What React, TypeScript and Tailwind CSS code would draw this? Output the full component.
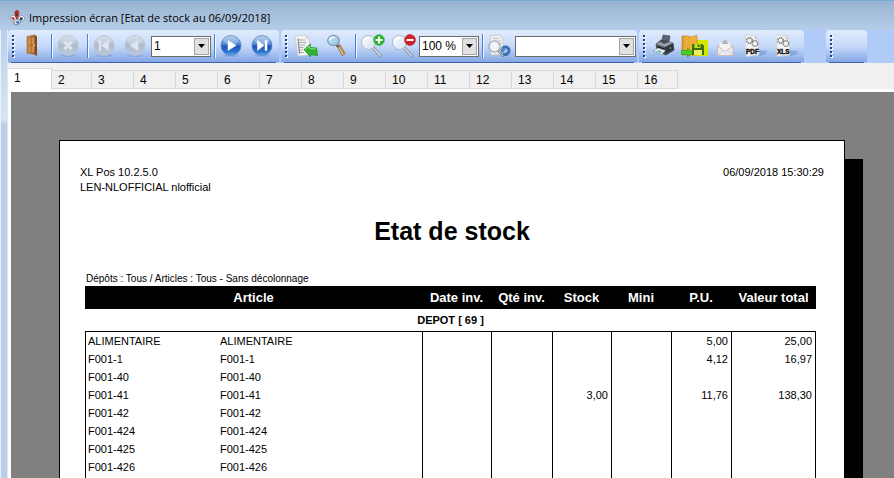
import { useState, type ReactNode } from "react";
import clsx from "clsx";

const TABS = Array.from({ length: 16 }, (_, i) => i + 1);

interface StockRow {
  code: string;
  label: string;
  stock?: string;
  price?: string;
  total?: string;
}

const ROWS: StockRow[] = [
  { code: "ALIMENTAIRE", label: "ALIMENTAIRE", price: "5,00", total: "25,00" },
  { code: "F001-1", label: "F001-1", price: "4,12", total: "16,97" },
  { code: "F001-40", label: "F001-40" },
  { code: "F001-41", label: "F001-41", stock: "3,00", price: "11,76", total: "138,30" },
  { code: "F001-42", label: "F001-42" },
  { code: "F001-424", label: "F001-424" },
  { code: "F001-425", label: "F001-425" },
  { code: "F001-426", label: "F001-426" },
];

function Icon({ children, w = 24 }: { children: ReactNode; w?: number }) {
  return (
    <svg width={w} height="24" viewBox={`0 0 ${w} 24`} aria-hidden="true" className="shrink-0">
      {children}
    </svg>
  );
}

// Gradients shared by all toolbar icons
function IconDefs() {
  return (
    <svg width="0" height="0" className="absolute" aria-hidden="true">
      <defs>
        <linearGradient id="ball" x1="0" y1="0" x2="0" y2="1">
          <stop offset="0" stopColor="#a3bfe6" />
          <stop offset="0.4" stopColor="#5a8fd8" />
          <stop offset="0.55" stopColor="#1d56b4" />
          <stop offset="0.8" stopColor="#2b72cf" />
          <stop offset="1" stopColor="#5db4f4" />
        </linearGradient>
        <linearGradient id="ballOff" x1="0" y1="0" x2="0" y2="1">
          <stop offset="0" stopColor="#ccd6e4" />
          <stop offset="0.5" stopColor="#b0bccd" />
          <stop offset="1" stopColor="#bccadf" />
        </linearGradient>
        <linearGradient id="wood" x1="0" y1="0" x2="1" y2="0">
          <stop offset="0" stopColor="#c98a4a" />
          <stop offset="1" stopColor="#a8662c" />
        </linearGradient>
        <linearGradient id="lens" x1="0" y1="0" x2="1" y2="1">
          <stop offset="0" stopColor="#ffffff" />
          <stop offset="1" stopColor="#cfe0f4" />
        </linearGradient>
        <linearGradient id="lensBlue" x1="0" y1="0" x2="1" y2="1">
          <stop offset="0" stopColor="#d9f2fc" />
          <stop offset="1" stopColor="#7fbbe0" />
        </linearGradient>
        <linearGradient id="folder" x1="0" y1="0" x2="1" y2="0">
          <stop offset="0" stopColor="#e0962a" />
          <stop offset="0.5" stopColor="#f7c150" />
          <stop offset="1" stopColor="#d98d1c" />
        </linearGradient>
      </defs>
    </svg>
  );
}

function Ball({ off, children }: { off?: boolean; children: ReactNode }) {
  return (
    <Icon>
      <ellipse cx="11" cy="21.5" rx="8" ry="1.5" fill="#6f90c4" opacity="0.4" />
      <circle cx="11" cy="11.5" r="10" fill={off ? "url(#ballOff)" : "url(#ball)"} stroke={off ? "#b7c2d2" : "#5580bf"} strokeWidth="0.7" />
      <ellipse cx="11" cy="6.500" rx="7.500" ry="4.200" fill="#fff" opacity={off ? 0.2 : 0.25} />
      <g transform="translate(-1 0)" fill={off ? "#dfe6ef" : "#fff"} stroke={off ? "#dfe6ef" : "#fff"} strokeWidth="0.5">
        {children}
      </g>
    </Icon>
  );
}

function AppIcon() {
  return (
    <svg width="16" height="16" viewBox="0 0 16 16" aria-hidden="true" className="shrink-0">
      <path d="M1 6.500 5 5l3 3-1 4-4-1z" fill="#f4f6fa" stroke="#7a8494" strokeWidth="0.6" />
      <path d="m9 7 4-2 3 3-2 3-4-1z" fill="#e9edf4" stroke="#7a8494" strokeWidth="0.6" />
      <path d="m5 10 4-1 3 3-3 3-4-1z" fill="#dce4f0" stroke="#4c5a70" strokeWidth="0.6" />
      <path d="M6 1.500 8.500 0 10 2l-.5 4L8 9 6 6z" fill="#d22f2a" stroke="#6b1d1d" strokeWidth="0.5" />
      <path d="M2 7.500 4.500 7 6 9l-2 1z" fill="#c9302c" />
      <path d="M11 7.500h3l-1 2.500h-2z" fill="#24344f" />
      <path d="m6.500 11.500 3-.5 1 2-2 1z" fill="#3f66a8" />
      <path d="M7 2.500 8 6" stroke="#26262c" strokeWidth="1" />
    </svg>
  );
}

function DoorIcon() {
  return (
    <Icon>
      <path d="m6 2.500 8-1.500v19.500L6 19z" fill="url(#wood)" stroke="#96602c" strokeWidth="0.6" />
      <path d="m14 1 2 1.500v20L14 20.500z" fill="#7d4b1d" />
      <path d="m7.500 4.500 2-.4v6l-2 .2zM11 3.900l2-.4V10l-2 .2zM7.500 12.500l2-.1v5.200l-2-.3zM11 12.300l2-.1v6l-2-.3z" fill="#d89d5c" stroke="#b07638" strokeWidth="0.500" />
      <circle cx="13.200" cy="11.300" r="0.900" fill="#f6e3a0" />
    </Icon>
  );
}

function ReportBackIcon() {
  return (
    <Icon>
      <path d="m1 2 11-1 3 3 1 17-12 1z" fill="#f4f4f2" stroke="#c3c6ca" strokeWidth="0.7" />
      <path d="m12 1 .3 3.300L15 4" fill="#dcdcdc" stroke="#b9bcc0" strokeWidth="0.6" />
      <path d="M4 6h7M4.200 8.500h8M4.300 11h7M4.500 13.500h5M4.600 16h4M4.800 18.500h5" stroke="#a3a7ab" strokeWidth="1" />
      <path d="M4 4.500 5.500 20" stroke="#8b8f94" strokeWidth="1.200" />
      <path d="M10 15.500 16.500 10v3.500l6 .5 1 7.500-7-.8V23z" fill="#2fb52d" stroke="#1b8a20" strokeWidth="0.7" />
      <path d="m11.500 15.300 4.200-3.400v2.600l6 .5" fill="none" stroke="#96e884" strokeWidth="0.9" />
    </Icon>
  );
}

function LoupeIcon() {
  return (
    <Icon>
      <path d="m12 12 3-1.500 5 9-2.500 2.500z" fill="#c48e50" stroke="#8a6334" strokeWidth="0.6" />
      <path d="m13.500 12.500 4.500 8" stroke="#ecc891" strokeWidth="1" />
      <path d="m10.500 11.500 2.500-1 1.500 2-2 1.200z" fill="#535d6b" />
      <ellipse cx="8.500" cy="6.500" rx="5.800" ry="5.200" fill="url(#lensBlue)" stroke="#8192a5" strokeWidth="1.200" />
      <path d="M4.500 6c.5-2 2.500-3 5-2.500" stroke="#fff" strokeWidth="1.200" fill="none" />
    </Icon>
  );
}

function ZoomIcon({ out }: { out?: boolean }) {
  return (
    <Icon>
      <path d="m12.500 14 7 8" stroke="#83898f" strokeWidth="3" strokeLinecap="round" />
      <path d="m12.500 14 7 8" stroke="#dcdfe2" strokeWidth="1.400" strokeLinecap="round" />
      <circle cx="7.500" cy="8.500" r="7" fill="url(#lens)" stroke="#aab5c2" strokeWidth="1" />
      <path d="M3 7c.7-2.300 2.500-3.500 5-3.200" stroke="#fff" strokeWidth="1.500" fill="none" />
      <circle cx="18" cy="6" r="5.400" fill={out ? "#d3202a" : "#27b32b"} stroke={out ? "#a3121b" : "#4fa951"} strokeWidth="0.600" />
      <path d={out ? "M14.500 6h7" : "M14.500 6h7M18 2.500v7"} stroke="#fff" strokeWidth="2" />
    </Icon>
  );
}

function PageSearchIcon() {
  return (
    <Icon>
      <path d="m2 1.500 10-.5 3 3 .5 16.500L3 21z" fill="#ececec" stroke="#bfc3c8" strokeWidth="0.7" />
      <path d="M5 4.500h6M5 7h8M10 9.500h4" stroke="#c2c5c9" />
      <path d="M14.500 14.500c1.500-2.500 6-2 6.500 1.500.500 3.500-3 5.500-6.500 4" fill="none" stroke="#3c70b8" strokeWidth="3" />
      <path d="m12 14 6 1.500-4.500 4z" fill="#4f86ca" />
      <path d="m10 16.500 5 5.500" stroke="#7c828a" strokeWidth="2.500" strokeLinecap="round" />
      <path d="m10 16.500 5 5.500" stroke="#d5d8dc" strokeWidth="1" strokeLinecap="round" />
      <circle cx="6.500" cy="12.500" r="5.500" fill="#f1f5fa" fillOpacity="0.900" stroke="#9aa3ad" strokeWidth="1.200" />
    </Icon>
  );
}

function PrinterIcon() {
  return (
    <Icon>
      <path d="m11 1 7 1-1.500 9-7-2z" fill="#5d6670" stroke="#3b434c" strokeWidth="0.600" />
      <path d="m4 10 5-4 12 3 1 7-8 5-9-4z" fill="#4b525a" stroke="#2c3238" strokeWidth="0.600" />
      <path d="m4 10 9 3 8-4-4-1-5 2-4-2z" fill="#98a0a8" />
      <path d="m13 13.500 8-4 .5 6-8 4.500z" fill="#30363c" />
      <path d="m5.500 13 7 2.500" stroke="#16191c" strokeWidth="1.500" />
      <path d="m1 17 5-3 7.500 2.500-4 4z" fill="#f3f7fa" stroke="#7d878f" strokeWidth="0.600" />
      <path d="m4 17.500 2.500-1.500 4 1.500-2 1.500z" fill="#6bb8c9" />
      <circle cx="18.500" cy="14" r="0.800" fill="#74dc68" />
    </Icon>
  );
}

function FolderSaveIcon() {
  return (
    <Icon w={28}>
      <path d="M12 6h15v16H12z" fill="#d3e600" />
      <path d="M1 2h7l2 1.500h6V21H1z" fill="url(#folder)" stroke="#b87818" strokeWidth="0.600" />
      <path d="m7 4 9-3v19l-9 2z" fill="#f1ae35" stroke="#c98c22" strokeWidth="0.500" />
      <path d="M11 10h10l2 1.500V21H11z" fill="#3e6e12" />
      <path d="M13.500 10h6v4h-6z" fill="#c8e218" />
      <path d="M13 16h8v5h-8z" fill="#e8f060" />
      <path d="M16.500 10.500h2V13h-2z" fill="#3e6e12" />
      <path d="M.500 16.500h6V14l5 4.500L6.500 23v-2.500h-6z" fill="#45cf22" stroke="#279a14" strokeWidth="0.600" />
    </Icon>
  );
}

function MailIcon() {
  return (
    <Icon>
      <path d="m3.500 11.500 7.500-6 8 6v10H3.500z" fill="#d5dae2" stroke="#bcc2cc" strokeWidth="0.700" />
      <path d="M5.500 8.500h11v6L11 17.500l-5.500-3z" fill="#f2f2f2" />
      <path d="m11 6-3.500 4h7z" fill="#a9b1ba" />
      <path d="M3.500 12v9.500H19V12l-8 5.500z" fill="#e8ebf0" stroke="#d8a6a0" strokeWidth="0.700" />
      <path d="m3.800 21.200 5.700-5M18.800 21.200l-5.600-5" stroke="#c3c9d2" strokeWidth="0.700" />
    </Icon>
  );
}

function ExportIcon({ kind }: { kind: string }) {
  return (
    <Icon w={28}>
      <path d="m13 16 11 1-1 3-8 2.500z" fill="#6c8fc4" opacity="0.550" />
      <path d="m2 1 10 .5 3 3.500 1 16-13 1.500z" fill="#f3f3f3" stroke="#c9ccd0" strokeWidth="0.700" />
      <path d="M12 1.500V5h3" fill="#dadada" stroke="#b9bcc0" strokeWidth="0.600" />
      <circle cx="6.500" cy="6.500" r="2.800" fill="none" stroke="#777b80" strokeWidth="1.500" strokeDasharray="1.600 0.600" />
      <circle cx="12" cy="9.500" r="2.800" fill="none" stroke="#85898e" strokeWidth="1.500" strokeDasharray="1.600 0.600" />
      <text x="3" y="19.500" fontFamily="Liberation Sans, sans-serif" fontSize="6.500" fontWeight="700" fill="#111" stroke="#111" strokeWidth="0.400">
        {kind}
      </text>
    </Icon>
  );
}

function ToolButton({ label, disabled, children }: { label: string; disabled?: boolean; children: ReactNode }) {
  return (
    <button type="button" aria-label={label} title={label} disabled={disabled} className="flex h-6 w-[31px] shrink-0 items-center justify-center">
      {children}
    </button>
  );
}

function Separator() {
  return <div className="ml-[3px] h-6 w-0.5 shrink-0 border-l border-[#4f7fd0] bg-[#f1f6ff]" />;
}

function ToolGroup({ children, className }: { children?: ReactNode; className?: string }) {
  return (
    <div className={clsx("flex shrink-0 flex-col", className)}>
      <div className="flex h-8 items-center rounded-t bg-linear-to-b from-[#e1ecfd] via-[#c7dafa] to-[#83a7e4] pr-px pl-1">
        <div className="mr-[3px] flex flex-col gap-0.5">
          {[0, 1, 2, 3, 4, 5].map((dot) => (
            <span key={dot} className="size-0.5 bg-[#27408b] shadow-[1px_1px_0_#fff]" />
          ))}
        </div>
        {children}
      </div>
      <div className="mx-[3px] h-px bg-[#3b62a8]" />
    </div>
  );
}

interface ComboProps {
  label: string;
  value: string;
  options: string[];
  onChange: (value: string) => void;
  className: string;
}

function Combo({ label, value, options, onChange, className }: ComboProps) {
  return (
    <div className={clsx("relative shrink-0", className)}>
      <select
        aria-label={label}
        value={value}
        onChange={(e) => onChange(e.target.value)}
        className="block h-[21px] w-full appearance-none border border-[#6d6d6d] bg-white pr-4 pl-0.5 text-xs/4 text-black outline-none"
      >
        {options.map((o) => (
          <option key={o} value={o}>
            {o}
          </option>
        ))}
      </select>
      <span className="pointer-events-none absolute inset-y-0.5 right-0.5 flex w-[15px] items-center justify-center border border-[#a5a5a5] bg-[#e1e1e1]">
        <svg width="7" height="4" viewBox="0 0 7 4" aria-hidden="true">
          <path d="M0 0h7L3.500 4z" fill="#000" />
        </svg>
      </span>
    </div>
  );
}

function Toolbar() {
  const [page, setPage] = useState("1");
  const [zoom, setZoom] = useState("100 %");
  const [search, setSearch] = useState("");

  return (
    <div className="flex gap-0.5 overflow-hidden bg-[#b1cbf8]">
      <ToolGroup>
        <ToolButton label="Quitter">
          <DoorIcon />
        </ToolButton>
        <Separator />
        <ToolButton label="Annuler" disabled>
          <Ball off>
            <path d="m7.500 9 2-2 2.500 2.500L14.500 7l2 2-2.500 2.500 2.500 2.500-2 2-2.500-2.500L9.500 16l-2-2 2.500-2.500z" />
          </Ball>
        </ToolButton>
        <Separator />
        <ToolButton label="Première page" disabled>
          <Ball off>
            <path d="M7 6.500h2v10H7zM16.500 6.500v10l-7-5z" />
          </Ball>
        </ToolButton>
        <ToolButton label="Page précédente" disabled>
          <Ball off>
            <path d="M15 6.500v10l-8-5z" />
          </Ball>
        </ToolButton>
        <Combo label="Page" value={page} options={TABS.map(String)} onChange={setPage} className="w-[60px]" />
        <Separator />
        <ToolButton label="Page suivante">
          <Ball>
            <path d="M9 6.500v10l8-5z" />
          </Ball>
        </ToolButton>
        <ToolButton label="Dernière page">
          <Ball>
            <path d="M7.500 6.500v10l6.500-5zM15 6.500h2v10h-2z" />
          </Ball>
        </ToolButton>
      </ToolGroup>

      <ToolGroup>
        <ToolButton label="Retour au rapport">
          <ReportBackIcon />
        </ToolButton>
        <ToolButton label="Rechercher">
          <LoupeIcon />
        </ToolButton>
        <Separator />
        <ToolButton label="Zoom avant">
          <ZoomIcon />
        </ToolButton>
        <ToolButton label="Zoom arrière">
          <ZoomIcon out />
        </ToolButton>
        <Combo label="Zoom" value={zoom} options={["50 %", "75 %", "100 %", "150 %", "200 %"]} onChange={setZoom} className="w-[60px]" />
        <Separator />
        <ToolButton label="Rechercher dans la page">
          <PageSearchIcon />
        </ToolButton>
        <Combo label="Texte recherché" value={search} options={[""]} onChange={setSearch} className="w-[121px]" />
      </ToolGroup>

      <ToolGroup>
        <ToolButton label="Imprimer">
          <PrinterIcon />
        </ToolButton>
        <ToolButton label="Enregistrer">
          <FolderSaveIcon />
        </ToolButton>
        <ToolButton label="Envoyer par mail" disabled>
          <MailIcon />
        </ToolButton>
        <ToolButton label="Exporter en PDF">
          <ExportIcon kind="PDF" />
        </ToolButton>
        <ToolButton label="Exporter en XLS">
          <ExportIcon kind="XLS" />
        </ToolButton>
      </ToolGroup>

      <ToolGroup className="ml-5 w-[41px]" />
    </div>
  );
}

function PageTabs() {
  const [active, setActive] = useState(1);

  return (
    <div role="tablist" className="flex h-[29px] items-end border-b-3 border-white bg-[#f0f0f0] text-xs">
      {TABS.map((n) => (
        <button
          key={n}
          type="button"
          role="tab"
          aria-selected={n === active}
          onClick={() => setActive(n)}
          className={clsx(
            "shrink-0 border-r border-[#d9d9d9] pl-1.5 text-left",
            n === active ? "h-[21px] border-t bg-white pb-0.5" : "h-[19px] border-y pt-px",
            n === 1 ? "w-[44px]" : n === 2 || n === 16 ? "w-10" : "w-[42px]"
          )}
        >
          {n}
        </button>
      ))}
    </div>
  );
}

function StockTable() {
  const cell = "border-l border-black px-[3px] text-right";

  return (
    <table className="w-full table-fixed border-separate border-spacing-0 text-[11px]">
      <colgroup>
        <col className="w-[132px]" />
        <col />
        <col className="w-[69px]" />
        <col className="w-[61px]" />
        <col className="w-[59px]" />
        <col className="w-[60px]" />
        <col className="w-[60px]" />
        <col className="w-[85px]" />
      </colgroup>
      <thead>
        <tr className="h-[23px] bg-black text-[13px] text-white">
          <th colSpan={2}>Article</th>
          <th className="whitespace-nowrap">Date inv.</th>
          <th className="whitespace-nowrap">Qté inv.</th>
          <th>Stock</th>
          <th>Mini</th>
          <th>P.U.</th>
          <th className="whitespace-nowrap">Valeur total</th>
        </tr>
      </thead>
      <tbody>
        <tr className="h-[23px]">
          <th colSpan={8} className="border-b border-black">
            DEPOT [ 69 ]
          </th>
        </tr>
        {ROWS.map((row) => (
          <tr key={row.code} className="h-[18px]">
            <td className="border-l border-black pl-0.5">{row.code}</td>
            <td className="pl-[3px]">{row.label}</td>
            <td className={cell} />
            <td className={cell} />
            <td className={cell}>{row.stock}</td>
            <td className={cell} />
            <td className={cell}>{row.price}</td>
            <td className={clsx(cell, "border-r")}>{row.total}</td>
          </tr>
        ))}
        {/* keeps the column rules running to the page foot */}
        <tr className="h-40">
          <td className="border-l border-black" />
          <td />
          <td className={cell} />
          <td className={cell} />
          <td className={cell} />
          <td className={cell} />
          <td className={cell} />
          <td className={clsx(cell, "border-r")} />
        </tr>
      </tbody>
    </table>
  );
}

export default function App() {
  return (
    <div className="flex h-screen flex-col overflow-hidden bg-[#bad0e9] font-['Liberation_Sans',Arial,sans-serif] text-black">
      <IconDefs />
      <header className="flex h-[30px] shrink-0 items-center gap-1 border-t border-[#79a9cf] bg-linear-to-b from-[#98b4d1] to-[#b5cde8] pt-1 pl-[9px]">
        <AppIcon />
        <h1 className="font-['Open_Sans',sans-serif] text-[11px]/4 whitespace-nowrap">Impression écran [Etat de stock au 06/09/2018]</h1>
      </header>
      <div className="flex min-h-0 flex-1">
        <div className="w-2 shrink-0 border-r border-l border-r-[#dfe8f3] border-l-[#e9f0f8] bg-linear-to-b from-[#b9d0ea] from-0% via-[#d8e5f4] via-20% to-[#bad0e9] to-21%" />
        <div className="flex min-w-0 flex-1 flex-col bg-white">
          <Toolbar />
          <PageTabs />
          <main className="ml-[3px] min-h-0 flex-1 overflow-hidden bg-[#808080] pt-12 pr-[49px] pl-12">
            <article className="border border-black bg-white px-5 pt-6 shadow-[18px_19px_0_#000]">
              <div className="flex justify-between text-[11px]/[15px]">
                <p>
                  XL Pos 10.2.5.0
                  <br />
                  LEN-NLOFFICIAL nlofficial
                </p>
                <p>06/09/2018 15:30:29</p>
              </div>
              <h2 className="mt-5 text-center text-[25px]/8 font-bold">Etat de stock</h2>
              <div className="mt-6 pr-2 pl-[5px]">
                <p className="pl-px text-[10px]/[15px]">Dépôts : Tous / Articles : Tous - Sans décolonnage</p>
                <StockTable />
              </div>
            </article>
          </main>
        </div>
      </div>
    </div>
  );
}
